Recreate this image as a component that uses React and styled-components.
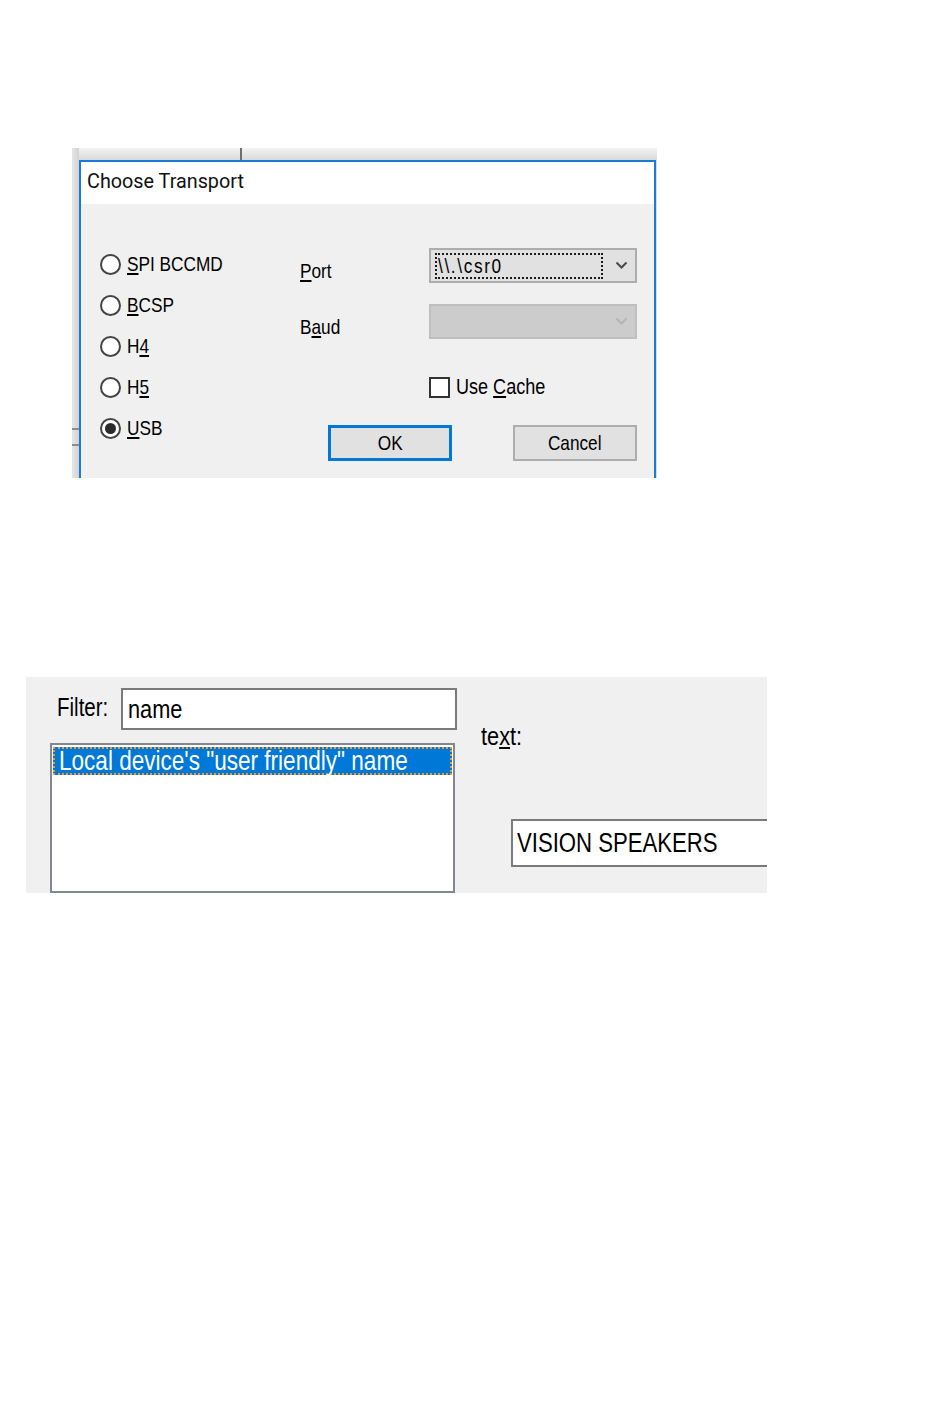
import React from "react";
import styled, { createGlobalStyle } from "styled-components";

const Global = createGlobalStyle`
  html, body { margin: 0; padding: 0; background: #ffffff; }
  body { font-family: "Liberation Sans", Arial, sans-serif; color: #000; }
`;

const pixelFont = `"Liberation Sans", Arial, sans-serif`;

const Page = styled.div`
  display: flex;
  flex-direction: column;
  align-items: flex-start;
  padding-top: 148px;
  min-height: 1402px;
  box-sizing: border-box;
`;

/* Narrow bitmap-like UI text: Arial metrics condensed horizontally */
const Narrow = styled.span`
  display: inline-block;
  white-space: pre;
  transform: scaleX(0.82);
  transform-origin: ${(p) => (p.$center ? "center" : "left")} center;
  letter-spacing: ${(p) => p.$spacing || 0}px;
`;

/* ---------- Screenshot 1 : Choose Transport dialog ---------- */

const Backdrop = styled.div`
  position: relative;
  margin-left: 72px;
  width: 585px;
  height: 330px;
  box-sizing: border-box;
  padding: 12px 1px 0 7px;
  display: flex;
  background:
    linear-gradient(to right, #e6e6e6 0, #d3d3d3 7px, transparent 7px),
    linear-gradient(to bottom, #f3f3f3 0, #d9d9d9 12px);

  &::before {
    content: "";
    position: absolute;
    left: 168px;
    top: 0;
    width: 2px;
    height: 12px;
    background: #6f6f6f;
  }
  &::after {
    content: "";
    position: absolute;
    left: 0;
    top: 280px;
    width: 7px;
    height: 14px;
    border-top: 2px solid #8d8d8d;
    border-bottom: 2px solid #8d8d8d;
  }
`;

const Dialog = styled.div`
  flex: 1;
  display: flex;
  flex-direction: column;
  border: 2px solid #1a7bd6;
  border-bottom: none;
  background: #f0f0f0;
`;

const TitleBar = styled.div`
  height: 42px;
  background: #ffffff;
  display: flex;
  align-items: center;
  padding: 0 0 3px 6px;
  box-sizing: border-box;
  font-family: Roboto, "Noto Sans", sans-serif;
  font-size: 19.8px;
  color: #111;
`;

const DialogBody = styled.div`
  flex: 1;
  display: flex;
  padding-left: 19px;
  font-family: ${pixelFont};
  font-size: 21px;
`;

const RadioGroup = styled.div`
  width: 200px;
  display: flex;
  flex-direction: column;
  gap: 19px;
  padding-top: 49px;
`;

const RadioRow = styled.div`
  display: flex;
  align-items: center;
  gap: 6px;
  height: 22px;
  line-height: 22px;
`;

const RadioCircle = styled.span`
  width: 21px;
  height: 21px;
  box-sizing: border-box;
  border: 2px solid #444;
  border-radius: 50%;
  background: #fff;
  display: grid;
  place-items: center;
  flex: none;

  &::after {
    content: "";
    display: ${(p) => (p.$checked ? "block" : "none")};
    width: 11px;
    height: 11px;
    border-radius: 50%;
    background: #2b2b2b;
  }
`;

const Acc = styled.u`
  text-decoration-thickness: 2px;
  text-underline-offset: 2px;
`;

const Form = styled.div`
  width: 337px;
  display: flex;
  flex-direction: column;
  padding-top: 44px;
`;

const FieldRow = styled.div`
  display: grid;
  grid-template-columns: 129px 208px;
  height: 35px;
  margin-top: ${(p) => p.$gap || 0}px;
`;

const FieldLabel = styled.span`
  line-height: 22px;
  padding-top: 12px;
`;

const Combo = styled.div`
  box-sizing: border-box;
  height: 35px;
  border: 2px solid ${(p) => (p.$disabled ? "#bfbfbf" : "#adadad")};
  background: ${(p) => (p.$disabled ? "#cccccc" : "#e1e1e1")};
  display: flex;
  align-items: center;
`;

const FocusBox = styled.div`
  box-sizing: border-box;
  margin-left: 4px;
  width: 168px;
  height: 26px;
  border: 2px dotted #1a1a1a;
  padding-left: 1px;
  line-height: 22px;
  white-space: pre;
`;

const Chevron = styled.svg`
  margin-left: auto;
  margin-right: 7px;
  flex: none;
`;

const CheckRow = styled.div`
  display: flex;
  align-items: center;
  gap: 6px;
  margin-top: 37px;
  padding-left: 129px;
  height: 22px;
  line-height: 22px;
  font-size: 22px;
`;

const CheckBox = styled.span`
  width: 21px;
  height: 21px;
  box-sizing: border-box;
  border: 2px solid #333;
  background: #fff;
  flex: none;
`;

const ButtonRow = styled.div`
  display: flex;
  margin-top: 27px;
  padding-left: 28px;
  gap: 61px;
`;

const Button = styled.button`
  width: 124px;
  height: 36px;
  box-sizing: border-box;
  background: #e1e1e1;
  border: ${(p) => (p.$default ? "3px solid #0078d7" : "2px solid #adadad")};
  font-family: ${pixelFont};
  font-size: 21px;
  color: #000;
  padding: 0;
  line-height: 22px;
  display: flex;
  align-items: center;
  justify-content: center;
`;

/* ---------- Screenshot 2 : Filter panel ---------- */

const Panel = styled.div`
  position: relative;
  margin-left: 26px;
  margin-top: 199px;
  width: 741px;
  height: 216px;
  background: #f0f0f0;
  overflow: hidden;
  display: flex;
  font-family: ${pixelFont};
  font-size: 26.5px;
`;

const LeftPane = styled.div`
  width: 431px;
  flex: none;
  box-sizing: border-box;
  padding: 11px 0 0 24px;
  display: flex;
  flex-direction: column;
`;

const FilterRow = styled.div`
  display: flex;
  align-items: center;
  margin-left: 7px;
`;

const FilterLabel = styled.span`
  width: 64px;
  font-size: 25px;
  padding-bottom: 4px;
`;

const TextBox = styled.div`
  box-sizing: border-box;
  width: ${(p) => p.$w}px;
  height: ${(p) => p.$h}px;
  border: 2px solid #7a7a7a;
  background: #fff;
  display: flex;
  align-items: center;
  padding-left: ${(p) => p.$pad}px;
  flex: none;
  white-space: pre;
`;

const ListBox = styled.div`
  margin-top: 13px;
  width: 405px;
  height: 220px;
  box-sizing: border-box;
  border: 2px solid #828790;
  background: #fff;
  padding: 2px 1px;
`;

const ListItem = styled.div`
  box-sizing: border-box;
  height: 28px;
  background: #0078d7;
  color: #fff;
  border: 2px dotted #f39a2e;
  padding-left: 4px;
  line-height: 24px;
  font-size: 27.5px;
  white-space: pre;
`;

const RightPane = styled.div`
  flex: 1;
  padding-left: 24px;
  display: flex;
  flex-direction: column;
`;

const TextLabel = styled.span`
  margin-top: 45px;
  line-height: 28px;
`;

const ValueBox = styled(TextBox)`
  margin-top: 69px;
  margin-left: 30px;
  border-right: none;
  font-size: 27px;
`;

const ChevronIcon = ({ color }) => (
  <Chevron width="13" height="9" viewBox="0 0 13 9">
    <path d="M1.5 1.5 L6.5 6.5 L11.5 1.5" fill="none" stroke={color} strokeWidth="2" />
  </Chevron>
);

const radios = [
  { pre: "", acc: "S", post: "PI BCCMD" },
  { pre: "", acc: "B", post: "CSP" },
  { pre: "H", acc: "4", post: "" },
  { pre: "H", acc: "5", post: "" },
  { pre: "", acc: "U", post: "SB", checked: true },
];

export default function App() {
  return (
    <>
      <Global />
      <Page>
        <Backdrop>
          <Dialog>
            <TitleBar>Choose Transport</TitleBar>
            <DialogBody>
              <RadioGroup>
                {radios.map((r, i) => (
                  <RadioRow key={i}>
                    <RadioCircle $checked={r.checked} />
                    <Narrow>
                      {r.pre}
                      <Acc>{r.acc}</Acc>
                      {r.post}
                    </Narrow>
                  </RadioRow>
                ))}
              </RadioGroup>
              <Form>
                <FieldRow>
                  <FieldLabel>
                    <Narrow>
                      <Acc>P</Acc>ort
                    </Narrow>
                  </FieldLabel>
                  <Combo>
                    <FocusBox>
                      <Narrow $spacing={2}>{"\\\\.\\csr0"}</Narrow>
                    </FocusBox>
                    <ChevronIcon color="#4a4a4a" />
                  </Combo>
                </FieldRow>
                <FieldRow $gap={21}>
                  <FieldLabel>
                    <Narrow>
                      B<Acc>a</Acc>ud
                    </Narrow>
                  </FieldLabel>
                  <Combo $disabled>
                    <ChevronIcon color="#b4b4b4" />
                  </Combo>
                </FieldRow>
                <CheckRow>
                  <CheckBox />
                  <Narrow>
                    Use <Acc>C</Acc>ache
                  </Narrow>
                </CheckRow>
                <ButtonRow>
                  <Button $default>
                    <Narrow $center>OK</Narrow>
                  </Button>
                  <Button>
                    <Narrow $center>Cancel</Narrow>
                  </Button>
                </ButtonRow>
              </Form>
            </DialogBody>
          </Dialog>
        </Backdrop>

        <Panel>
          <LeftPane>
            <FilterRow>
              <FilterLabel>
                <Narrow>Filter:</Narrow>
              </FilterLabel>
              <TextBox $w={336} $h={42} $pad={5}>
                <Narrow>name</Narrow>
              </TextBox>
            </FilterRow>
            <ListBox>
              <ListItem>
                <Narrow>Local device's "user friendly" name</Narrow>
              </ListItem>
            </ListBox>
          </LeftPane>
          <RightPane>
            <TextLabel>
              <Narrow>
                te<Acc>x</Acc>t:
              </Narrow>
            </TextLabel>
            <ValueBox $w={300} $h={48} $pad={4}>
              <Narrow>VISION SPEAKERS</Narrow>
            </ValueBox>
          </RightPane>
        </Panel>
      </Page>
    </>
  );
}
